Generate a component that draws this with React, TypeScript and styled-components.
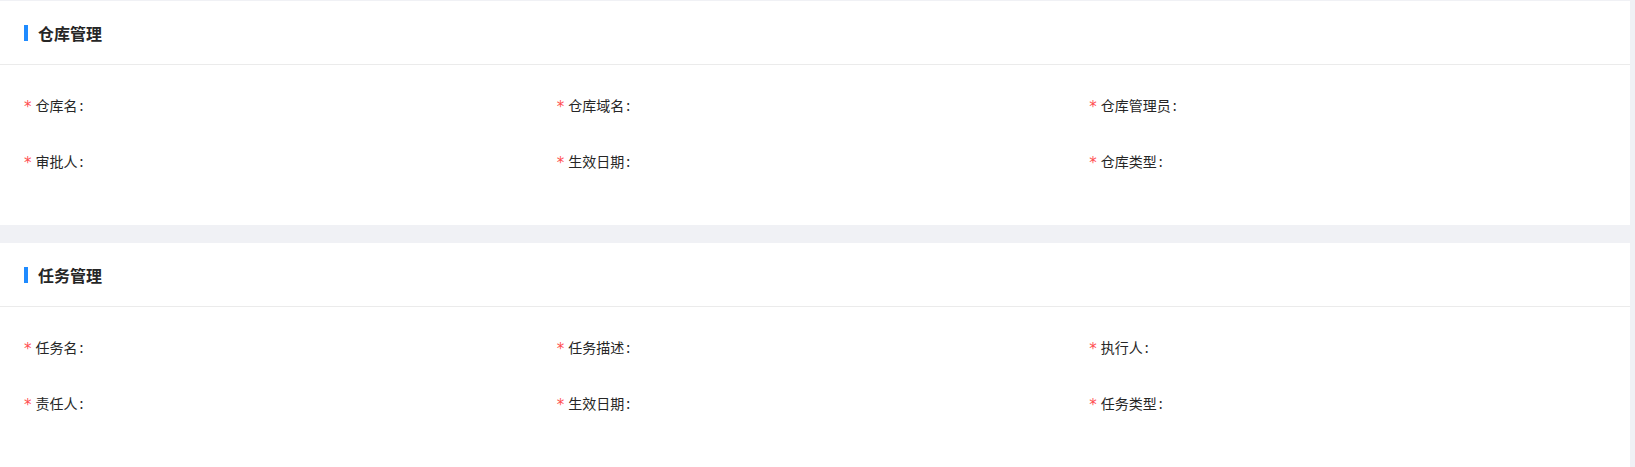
import React from "react";
import styled, { createGlobalStyle } from "styled-components";

const GlobalStyle = createGlobalStyle`
  html, body {
    margin: 0;
    padding: 0;
    background: #f0f1f5;
    font-family: "Noto Sans CJK SC", "Noto Sans", sans-serif;
  }
  * { box-sizing: border-box; }
`;

const Page = styled.div`
  display: flex;
  flex-direction: column;
  gap: 18px;
  padding: 1px 5px 0 0;
  width: 1635px;
`;

const Card = styled.section`
  background: #ffffff;
`;

const CardHeader = styled.div`
  height: 64px;
  display: flex;
  align-items: center;
  padding: 0 24px;
  border-bottom: 1px solid #ebebeb;
`;

const TitleBar = styled.span`
  width: 4px;
  height: 16px;
  background: #1f8bff;
  margin-right: 10px;
  margin-top: 1px;
`;

const Title = styled.h3`
  margin: 0;
  font-size: 16px;
  font-weight: 600;
  color: #262626;
  line-height: 24px;
`;

const CardBody = styled.div`
  padding: 24px 24px 24px;
`;

const Grid = styled.div`
  display: grid;
  grid-template-columns: repeat(3, 1fr);
  column-gap: 16px;
`;

const Item = styled.div`
  height: 32px;
  margin-bottom: 24px;
  display: flex;
  align-items: center;
  font-size: 14px;
  color: #262626;
`;

const Required = styled.span`
  color: #ff4d4f;
  font-family: "DejaVu Sans", sans-serif;
  font-size: 15px;
  margin-right: 4px;
  line-height: 1;
  position: relative;
  top: 2px;
`;

const Colon = styled.span`
  margin: 0 8px 0 2px;
`;

type SectionProps = { title: string; fields: string[] };

const Section: React.FC<SectionProps> = ({ title, fields }) => (
  <Card>
    <CardHeader>
      <TitleBar />
      <Title>{title}</Title>
    </CardHeader>
    <CardBody>
      <Grid>
        {fields.map((f) => (
          <Item key={f}>
            <Required>*</Required>
            {f}
            <Colon>:</Colon>
          </Item>
        ))}
      </Grid>
    </CardBody>
  </Card>
);

export default function App() {
  return (
    <>
      <GlobalStyle />
      <Page>
        <Section
          title="仓库管理"
          fields={["仓库名", "仓库域名", "仓库管理员", "审批人", "生效日期", "仓库类型"]}
        />
        <Section
          title="任务管理"
          fields={["任务名", "任务描述", "执行人", "责任人", "生效日期", "任务类型"]}
        />
      </Page>
    </>
  );
}
